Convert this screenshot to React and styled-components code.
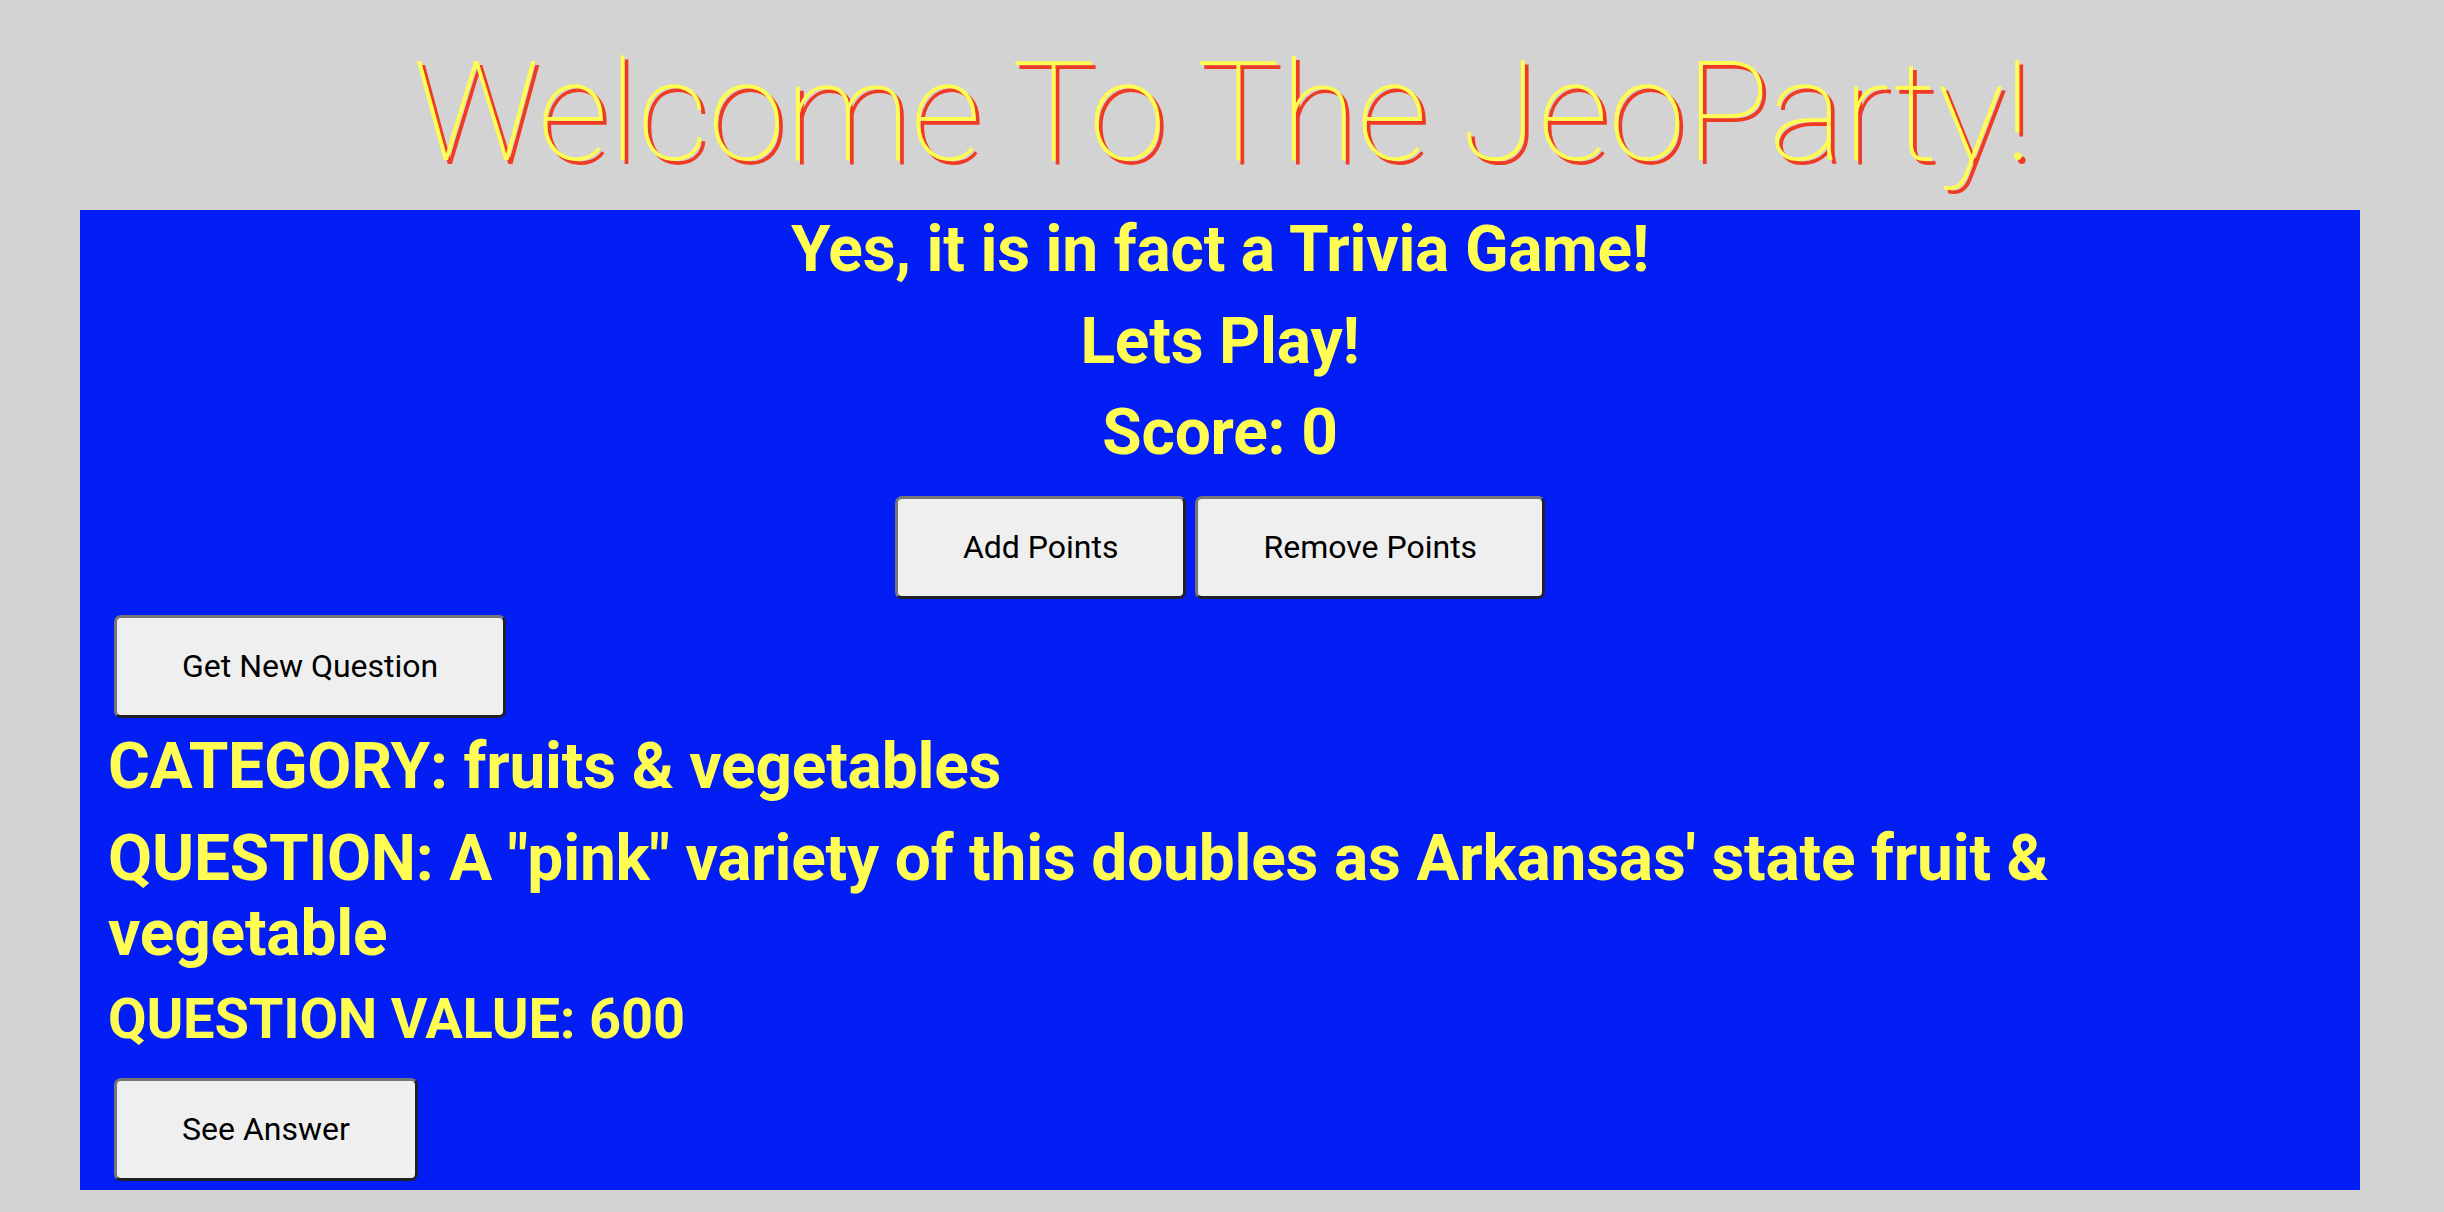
import React from "react";
import styled, { createGlobalStyle } from "styled-components";

const GlobalStyle = createGlobalStyle`
  body {
    margin: 0;
    background: #d3d3d3;
    font-family: Roboto, "Liberation Sans", sans-serif;
  }
`;

const Page = styled.div`
  display: flex;
  flex-direction: column;
`;

const Title = styled.h1`
  margin: 30px 0 16px;
  font-family: Roboto, sans-serif;
  font-weight: 100;
  font-size: 140px;
  line-height: 164px;
  text-align: center;
  color: #fffd52;
  text-shadow: 4px 4px 0 #ef3b24;
`;

const Board = styled.div`
  margin: 0 84px 0 80px;
  padding: 2px 28px 9px;
  background: #031ef4;
  display: flex;
  flex-direction: column;
`;

const Heading = styled.h2`
  margin: ${(props) => props.$top || 0}px 0 0;
  font-size: ${(props) => props.$size || 64}px;
  line-height: 1.172;
  letter-spacing: -0.2px;
  font-weight: 700;
  color: #fffd52;
  text-align: ${(props) => (props.$center ? "center" : "left")};
`;

const ButtonRow = styled.div`
  display: flex;
  justify-content: ${(props) => (props.$center ? "center" : "flex-start")};
  gap: 9px;
  margin-top: ${(props) => props.$top}px;
  padding-left: ${(props) => (props.$center ? 0 : 6)}px;
`;

const Button = styled.button`
  padding: 30px 65px;
  font-family: Roboto, sans-serif;
  font-size: 32px;
  line-height: 37px;
  color: #000;
  background: #efefef;
  border-style: solid;
  border-width: 3px;
  border-color: #767676 #222 #222 #767676;
  border-radius: 7px;
  cursor: pointer;
`;

export default function App() {
  return (
    <Page>
      <GlobalStyle />
      <Title>Welcome To The JeoParty!</Title>
      <Board>
        <Heading $center>Yes, it is in fact a Trivia Game!</Heading>
        <Heading $center $top={17}>Lets Play!</Heading>
        <Heading $center $top={16}>Score: 0</Heading>
        <ButtonRow $center $top={26}>
          <Button>Add Points</Button>
          <Button>Remove Points</Button>
        </ButtonRow>
        <ButtonRow $top={16}>
          <Button>Get New Question</Button>
        </ButtonRow>
        <Heading $top={11}>CATEGORY: fruits &amp; vegetables</Heading>
        <Heading $top={17}>
          QUESTION: A "pink" variety of this doubles as Arkansas' state fruit &amp; vegetable
        </Heading>
        <Heading $top={16} $size={56}>QUESTION VALUE: 600</Heading>
        <ButtonRow $top={25}>
          <Button>See Answer</Button>
        </ButtonRow>
      </Board>
    </Page>
  );
}
